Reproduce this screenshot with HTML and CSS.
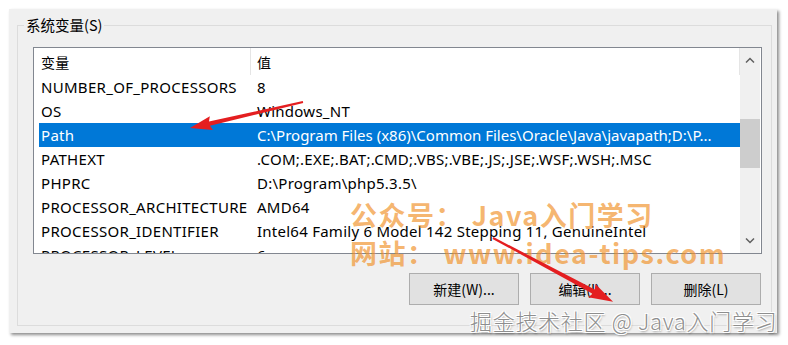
FILE: index.html
```html
<!DOCTYPE html>
<html lang="zh-CN">
<head>
    <meta charset="UTF-8">
    <title>系统变量</title>
    <link rel="stylesheet" href="styles.css">
</head>
<body>
    <div class="window">
        <fieldset class="group">
            <legend>系统变量(S)</legend>
            <div class="listbox">
                <div class="list-main">
                    <div class="list-header">
                        <div class="col name">变量</div>
                        <div class="col value">值</div>
                    </div>
                    <div class="row"><div class="col name">NUMBER_OF_PROCESSORS</div><div class="col value">8</div></div>
                    <div class="row"><div class="col name">OS</div><div class="col value">Windows_NT</div></div>
                    <div class="row selected"><div class="col name">Path</div><div class="col value">C:\Program Files (x86)\Common Files\Oracle\Java\javapath;D:\P...</div></div>
                    <div class="row"><div class="col name">PATHEXT</div><div class="col value">.COM;.EXE;.BAT;.CMD;.VBS;.VBE;.JS;.JSE;.WSF;.WSH;.MSC</div></div>
                    <div class="row"><div class="col name">PHPRC</div><div class="col value">D:\Program\php5.3.5\</div></div>
                    <div class="row"><div class="col name">PROCESSOR_ARCHITECTURE</div><div class="col value">AMD64</div></div>
                    <div class="row"><div class="col name">PROCESSOR_IDENTIFIER</div><div class="col value">Intel64 Family 6 Model 142 Stepping 11, GenuineIntel</div></div>
                    <div class="row"><div class="col name">PROCESSOR_LEVEL</div><div class="col value">6</div></div>
                </div>
                <div class="scrollbar">
                    <div class="scroll-btn">
                        <svg width="10" height="6" viewBox="0 0 10 6"><polyline points="1,5.5 5,1.5 9,5.5" fill="none" stroke="#606060" stroke-width="1.5"/></svg>
                    </div>
                    <div class="track"><div class="thumb"></div></div>
                    <div class="scroll-btn">
                        <svg width="10" height="6" viewBox="0 0 10 6"><polyline points="1,0.5 5,4.5 9,0.5" fill="none" stroke="#606060" stroke-width="1.5"/></svg>
                    </div>
                </div>
            </div>
            <div class="buttons">
                <button>新建(W)...</button>
                <button>编辑(I)...</button>
                <button>删除(L)</button>
            </div>
        </fieldset>
    </div>

    <div class="stamp">
        <div>公众号：&nbsp;Java入门学习</div>
        <div>网站：&nbsp;www.idea-tips.com</div>
    </div>

    <svg class="arrows" width="788" height="345" viewBox="0 0 788 345">
        <g transform="translate(303,102) rotate(167)">
            <polygon points="0,-1 96,-2.2 94,-7 116,0 94,7 96,2.2 0,1" fill="#e41e20"/>
        </g>
        <g transform="translate(493,238) rotate(28)">
            <polygon points="0,-1 114,-2.4 112,-7.5 136,0 112,7.5 114,2.4 0,1" fill="#e41e20"/>
        </g>
    </svg>

    <div class="credit">掘金技术社区 @ Java入门学习</div>
</body>
</html>
```

FILE: styles.css
```css
body {
    margin: 0;
    width: 788px;
    height: 345px;
    overflow: hidden;
    position: relative;
    background: #fff;
    font-family: "Noto Sans", "Noto Sans CJK SC", sans-serif;
    font-size: 15px;
    color: #000;
}
.window {
    margin: 9px 0 0 9px;
    width: 768px;
    height: 324px;
    box-sizing: border-box;
    padding: 7px 5px 0 8px;
    background: #f0f0f0;
    box-shadow: 2px 2px 3px rgba(0, 0, 0, 0.45);
}
.group {
    margin: 0;
    padding: 13px 9px 20px 6px;
    border: 1px solid #dcdcdc;
}
.group legend {
    padding: 0 2px;
    font-family: "Noto Sans CJK SC", sans-serif;
    font-size: 14.5px;
    line-height: 18px;
}
.listbox {
    margin-left: 9px;
    height: 207px;
    box-sizing: border-box;
    border: 1px solid #828790;
    background: #fff;
    display: flex;
    overflow: hidden;
}
.list-main {
    flex: 1;
    padding-left: 5px;
    overflow: hidden;
}
.list-header, .row {
    display: grid;
    grid-template-columns: 212px 1fr;
    white-space: nowrap;
}
.list-header {
    height: 27px;
    align-items: center;
}
.list-header .col {
    font-family: "Noto Sans CJK SC", sans-serif;
    font-size: 14px;
    height: 100%;
    display: flex;
    align-items: center;
}
.list-header .name {
    border-right: 1px solid #e5e5e5;
}
.list-header .value {
    border-right: 1px solid #e5e5e5;
}
.row {
    height: 24px;
    align-items: center;
}
.col.name {
    padding-left: 2px;
    letter-spacing: 0.3px;
}
.col.value {
    padding-left: 6px;
    overflow: hidden;
    letter-spacing: 0.25px;
}
.row.selected .col.value {
    letter-spacing: 0;
}
.row.selected {
    background: #0078d7;
    color: #fff;
}
.scrollbar {
    width: 20px;
    margin-right: 1px;
    background: #f0f0f0;
    display: flex;
    flex-direction: column;
}
.scroll-btn {
    height: 24px;
    display: flex;
    align-items: center;
    justify-content: center;
}
.track {
    flex: 1;
}
.thumb {
    margin-top: 47px;
    height: 49px;
    background: #cdcdcd;
}
.buttons {
    margin-top: 19px;
    padding-right: 1px;
    display: flex;
    justify-content: flex-end;
    gap: 11px;
}
.buttons button {
    width: 110px;
    height: 32px;
    background: #e1e1e1;
    border: 1px solid #adadad;
    font-family: "Noto Sans CJK SC", sans-serif;
    font-size: 14px;
    color: #000;
    padding: 0;
}
.stamp {
    position: absolute;
    left: 350px;
    top: 196px;
    font-family: "Noto Sans CJK SC", sans-serif;
    font-weight: bold;
    font-size: 27px;
    letter-spacing: 1.5px;
    line-height: 38px;
    color: rgba(240, 145, 40, 0.68);
    white-space: nowrap;
}
.arrows {
    position: absolute;
    left: 0;
    top: 0;
}
.credit {
    position: absolute;
    left: 470px;
    top: 306px;
    font-family: "Noto Sans CJK SC", sans-serif;
    font-weight: 300;
    font-size: 22px;
    letter-spacing: 0.7px;
    line-height: 28px;
    color: #8e8e8e;
    white-space: nowrap;
    text-shadow: 1px 1px 0 #fff, -1px -1px 0 #fff, 1px -1px 0 #fff, -1px 1px 0 #fff, 1px 2px 2px rgba(0, 0, 0, 0.35);
}
```
